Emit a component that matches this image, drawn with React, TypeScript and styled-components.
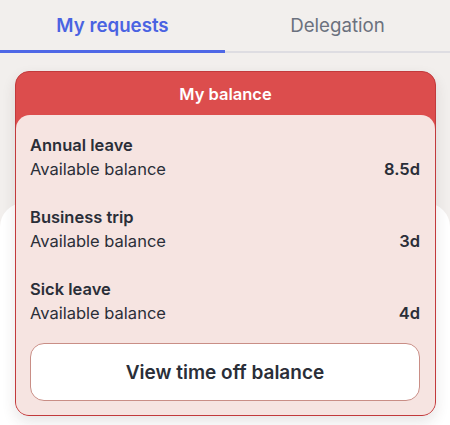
import styled, { createGlobalStyle } from 'styled-components';

const GlobalStyle = createGlobalStyle`
  * {
    box-sizing: border-box;
  }
  body {
    margin: 0;
    background: #f2efed;
    font-family: Inter, 'Noto Sans', sans-serif;
    color: #2a2e38;
  }
`;

const Page = styled.main`
  width: 450px;
  height: 425px;
  overflow: hidden;
  background: #f2efed;
`;

const Tabs = styled.nav`
  display: grid;
  grid-template-columns: 1fr 1fr;
  height: 53px;
  border-bottom: 2px solid #dedde2;
`;

const Tab = styled.button<{ $active?: boolean }>`
  position: relative;
  border: 0;
  background: transparent;
  font-family: inherit;
  font-size: 18.7px;
  font-weight: ${(p) => (p.$active ? 600 : 400)};
  color: ${(p) => (p.$active ? '#4a63e2' : '#6b717e')};
  padding: 0;
  &::after {
    content: '';
    position: absolute;
    left: 0;
    right: 0;
    bottom: -2px;
    height: 3px;
    background: ${(p) => (p.$active ? '#4f68e6' : 'transparent')};
  }
`;

const Content = styled.section`
  position: relative;
  padding: 18px 14px 0 15px;
  &::before {
    content: '';
    position: absolute;
    left: 0;
    right: 0;
    top: 150px;
    height: 400px;
    background: #ffffff;
    border-radius: 24px 24px 0 0;
  }
`;

const Card = styled.article`
  position: relative;
  background: #dc4d4d;
  border: 1px solid #c23a3c;
  border-radius: 14px;
  overflow: hidden;
  box-shadow: 0 6px 14px rgba(60, 40, 40, 0.12);
`;

const CardHeader = styled.h2`
  margin: 0;
  height: 43px;
  display: flex;
  align-items: center;
  justify-content: center;
  color: #ffffff;
  font-size: 16.5px;
  font-weight: 600;
`;

const CardBody = styled.div`
  background: #f6e4e1;
  border-radius: 14px 14px 0 0;
  padding: 18px 15px 14px 14px;
  display: flex;
  flex-direction: column;
  gap: 24px;
`;

const Leave = styled.div`
  display: flex;
  flex-direction: column;
`;

const LeaveName = styled.div`
  font-size: 16.5px;
  font-weight: 600;
  line-height: 24px;
`;

const BalanceRow = styled.div`
  display: flex;
  justify-content: space-between;
  font-size: 16.5px;
  line-height: 24px;
  strong {
    font-weight: 600;
  }
`;

const ViewButton = styled.button`
  margin-top: -6px;
  height: 58px;
  border: 1px solid #c98e86;
  border-radius: 14px;
  background: #ffffff;
  font-family: inherit;
  font-size: 19px;
  font-weight: 600;
  color: #2a2e38;
`;

const leaves = [
  { name: 'Annual leave', value: '8.5d' },
  { name: 'Business trip', value: '3d' },
  { name: 'Sick leave', value: '4d' },
];

export default function App() {
  return (
    <Page>
      <GlobalStyle />
      <Tabs>
        <Tab $active>My requests</Tab>
        <Tab>Delegation</Tab>
      </Tabs>
      <Content>
        <Card>
          <CardHeader>My balance</CardHeader>
          <CardBody>
            {leaves.map((l) => (
              <Leave key={l.name}>
                <LeaveName>{l.name}</LeaveName>
                <BalanceRow>
                  <span>Available balance</span>
                  <strong>{l.value}</strong>
                </BalanceRow>
              </Leave>
            ))}
            <ViewButton type="button">View time off balance</ViewButton>
          </CardBody>
        </Card>
      </Content>
    </Page>
  );
}
